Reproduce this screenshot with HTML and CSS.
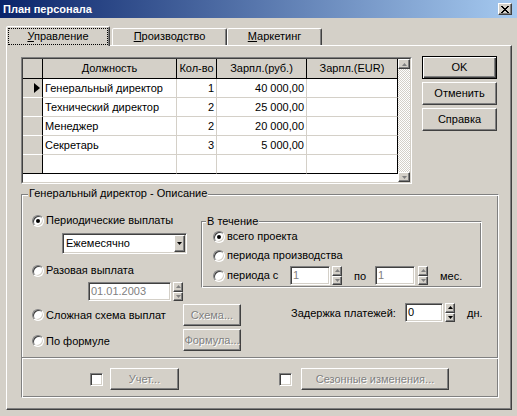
FILE: index.html
```html
<!DOCTYPE html>
<html lang="ru">
<head>
<meta charset="utf-8">
<title>План персонала</title>
<link rel="stylesheet" href="styles.css">
</head>
<body>
<div class="window">
  <div class="titlebar">
    <span class="title">План персонала</span>
    <span class="close"><svg width="8" height="7" viewBox="0 0 8 7"><path d="M0 0h2v1H0zM6 0h2v1H6zM1 1h2v1H1zM5 1h2v1H5zM2 2h4v1H2zM3 3h2v1H3zM2 4h4v1H2zM1 5h2v1H1zM5 5h2v1H5zM0 6h2v1H0zM6 6h2v1H6z" fill="#000"/></svg></span>
  </div>
  <div class="tabs">
    <div class="tab active"><span class="focus"><u>У</u>правление</span></div>
    <div class="tab t2"><u>П</u>роизводство</div>
    <div class="tab t3"><u>М</u>аркетинг</div>
  </div>
  <div class="panel">
    <div class="top">
      <div class="gridbox">
        <div class="gridin">
          <div class="table">
            <div class="row head">
              <div class="c ind"></div>
              <div class="c">Должность</div>
              <div class="c">Кол-во</div>
              <div class="c">Зарпл.(руб.)</div>
              <div class="c">Зарпл.(EUR)</div>
            </div>
            <div class="row">
              <div class="c ind"><svg width="6" height="10" viewBox="0 0 6 10"><path d="M0 0L6 5L0 10z" fill="#000"/></svg></div>
              <div class="c">Генеральный директор</div>
              <div class="c num">1</div>
              <div class="c num">40 000,00</div>
              <div class="c last"></div>
            </div>
            <div class="row">
              <div class="c ind"></div>
              <div class="c">Технический директор</div>
              <div class="c num">2</div>
              <div class="c num">25 000,00</div>
              <div class="c last"></div>
            </div>
            <div class="row">
              <div class="c ind"></div>
              <div class="c">Менеджер</div>
              <div class="c num">2</div>
              <div class="c num">20 000,00</div>
              <div class="c last"></div>
            </div>
            <div class="row">
              <div class="c ind"></div>
              <div class="c">Секретарь</div>
              <div class="c num">3</div>
              <div class="c num">5 000,00</div>
              <div class="c last"></div>
            </div>
            <div class="row end">
              <div class="c ind"></div>
              <div class="c"></div>
              <div class="c"></div>
              <div class="c"></div>
              <div class="c last"></div>
            </div>
            <div class="filler"></div>
          </div>
          <div class="scroll">
            <div class="sbtn"><svg width="5" height="3" viewBox="0 0 5 3"><path d="M2.5 0L5 3H0z" fill="#808080"/></svg></div>
            <div class="track"></div>
            <div class="sbtn"><svg width="5" height="3" viewBox="0 0 5 3"><path d="M0 0h5L2.5 3z" fill="#808080"/></svg></div>
          </div>
        </div>
      </div>
      <div class="btns">
        <div class="btn default">OK</div>
        <div class="btn">Отменить</div>
        <div class="btn">Справка</div>
      </div>
    </div>

    <div class="group main">
      <span class="gtitle">Генеральный директор - Описание</span>
      <div class="upper">
        <div class="lcol">
          <div class="rrow"><span class="radio on"></span><span>Периодические выплаты</span></div>
          <div class="combo">
            <span class="combo-text">Ежемесячно</span>
            <span class="combo-btn"><svg width="5" height="3" viewBox="0 0 5 3"><path d="M0 0h5L2.5 3z" fill="#000"/></svg></span>
          </div>
          <div class="rrow r2"><span class="radio"></span><span>Разовая выплата</span></div>
          <div class="date-row">
            <div class="edit dis e83">01.01.2003</div>
            <div class="spin dis">
              <i><svg width="5" height="3" viewBox="0 0 5 3"><path d="M2.5 0L5 3H0z"/></svg></i>
              <i><svg width="5" height="3" viewBox="0 0 5 3"><path d="M0 0h5L2.5 3z"/></svg></i>
            </div>
          </div>
        </div>
        <div class="group during">
          <span class="gtitle">В течение</span>
          <div class="rrow"><span class="radio on"></span><span>всего проекта</span></div>
          <div class="rrow d2"><span class="radio"></span><span>периода производства</span></div>
          <div class="prow">
            <div class="rrow plabel"><span class="radio"></span><span>периода с</span></div>
            <div class="edit dis e40">1</div>
            <div class="spin dis">
              <i><svg width="5" height="3" viewBox="0 0 5 3"><path d="M2.5 0L5 3H0z"/></svg></i>
              <i><svg width="5" height="3" viewBox="0 0 5 3"><path d="M0 0h5L2.5 3z"/></svg></i>
            </div>
            <span class="po">по</span>
            <div class="edit dis e40">1</div>
            <div class="spin dis s3">
              <i><svg width="5" height="3" viewBox="0 0 5 3"><path d="M2.5 0L5 3H0z"/></svg></i>
              <i><svg width="5" height="3" viewBox="0 0 5 3"><path d="M0 0h5L2.5 3z"/></svg></i>
            </div>
            <span class="mes">мес.</span>
          </div>
        </div>
      </div>

      <div class="orow oe">
        <div class="rrow olabel"><span class="radio"></span><span>Сложная схема выплат</span></div>
        <div class="btn dis small">Схема...</div>
        <div class="delay">
          <span class="delay-label">Задержка платежей:</span>
          <div class="edit e38">0</div>
          <div class="spin">
            <i><svg width="5" height="3" viewBox="0 0 5 3"><path d="M2.5 0L5 3H0z"/></svg></i>
            <i><svg width="5" height="3" viewBox="0 0 5 3"><path d="M0 0h5L2.5 3z"/></svg></i>
          </div>
          <span class="dn">дн.</span>
        </div>
      </div>
      <div class="orow of">
        <div class="rrow olabel"><span class="radio"></span><span>По формуле</span></div>
        <div class="btn dis small">Формула...</div>
      </div>
      <div class="sep"></div>
      <div class="brow">
        <span class="check"></span>
        <div class="btn dis b-uchet">Учет...</div>
        <span class="check c2"></span>
        <div class="btn dis b-season">Сезонные изменения...</div>
      </div>
    </div>
  </div>
</div>
</body>
</html>
```
FILE: styles.css
```css
* { box-sizing: border-box; }
html, body { margin: 0; padding: 0; }
body {
  width: 517px; height: 416px; overflow: hidden;
  background: #d4d0c8;
  font-family: "Liberation Sans", Arial, sans-serif;
  font-size: 11px; color: #000;
}
.window { width: 517px; height: 416px; display: flex; flex-direction: column; }

/* title bar */
.titlebar {
  height: 18px; flex: none;
  display: flex; align-items: center; justify-content: space-between;
  padding: 0 5px 0 3px;
  background: linear-gradient(to right, #0a246a, #a6caf0);
}
.title { color: #fff; font-weight: bold; line-height: 18px; }
.close {
  width: 14px; height: 12px; background: #d4d0c8;
  border: 1px solid; border-color: #fff #404040 #404040 #fff;
  box-shadow: inset -1px -1px #808080;
  display: flex; align-items: center; justify-content: center;
}
.close svg { display: block; }

/* tabs */
.tabs { height: 27px; flex: none; display: flex; align-items: flex-end; padding-left: 6px; }
.tab {
  height: 17px; padding-top: 1px; line-height: 13px; text-align: center; white-space: nowrap;
  border: 1px solid; border-bottom: 0; border-color: #fff #404040 transparent #fff;
  box-shadow: inset -1px 0 #808080;
  border-radius: 2px 2px 0 0;
  background: #d4d0c8;
}
.tab.active { width: 104px; height: 20px; margin-bottom: -1px; padding: 1px 1px 0; position: relative; z-index: 1; }
.focus { display: block; border: 1px dotted #000; padding: 1px 0; line-height: 13px; }
.tab.t2 { width: 115px; margin-left: 2px; }
.tab.t3 { width: 95px; }

/* panel */
.panel {
  width: 506px; height: 365px; margin-left: 6px; flex: none;
  border: 1px solid; border-color: #fff #404040 #404040 #fff;
  box-shadow: inset -1px -1px #808080;
  padding: 10px 0 0 14px;
  display: flex; flex-direction: column;
}
.top { display: flex; align-items: flex-start; }

/* grid */
.gridbox {
  margin-top: 1px; width: 391px; height: 127px;
  border: 1px solid; border-color: #808080 #fff #fff #808080;
}
.gridin {
  height: 100%; display: flex; background: #fff;
  border: 1px solid; border-color: #404040 #d4d0c8 #d4d0c8 #404040;
}
.table { width: 375px; display: flex; flex-direction: column; }
.row { display: grid; grid-template-columns: 20px 134px 40px 90px 91px; height: 19px; flex: none; }
.row.head { height: 20px; }
.c {
  border-right: 1px solid #d4d0c8; border-bottom: 1px solid #d4d0c8;
  padding: 0 2px; line-height: 18px; white-space: nowrap; overflow: hidden;
}
.c.num { text-align: right; }
.c.last { border-right-color: #000; }
.c.ind {
  background: #d4d0c8; border-right-color: #000; border-bottom-color: #fff;
  display: flex; align-items: center; justify-content: flex-end; padding: 0 2px 0 0;
}
.c.ind svg { display: block; }
.row.end .c { border-bottom-color: #000; }
.head .c {
  background: #d4d0c8; border-right-color: #000; border-bottom-color: #000;
  text-align: center; line-height: 19px; padding: 0;
}
.filler { flex: 1; }
.scroll { width: 12px; display: flex; flex-direction: column; }
.sbtn {
  height: 10px; flex: none; background: #d4d0c8;
  border: 1px solid; border-color: #fff #404040 #404040 #fff;
  box-shadow: inset -1px -1px #808080;
  display: flex; align-items: center; justify-content: center;
}
.sbtn svg { display: block; }
.track { flex: 1; background: repeating-conic-gradient(#d4d0c8 0 25%, #fff 0 50%) 0 0 / 2px 2px; }

/* buttons */
.btns { margin-left: 10px; display: flex; flex-direction: column; gap: 3px; }
.btn {
  width: 75px; height: 23px; background: #d4d0c8;
  border: 1px solid; border-color: #fff #404040 #404040 #fff;
  box-shadow: inset -1px -1px #808080;
  display: flex; align-items: center; justify-content: center;
  white-space: nowrap; line-height: 13px;
}
.btn.default {
  border-color: #000;
  box-shadow: inset 1px 1px #fff, inset -1px -1px #404040, inset -2px -2px #808080;
}
.btn.dis { color: #808080; text-shadow: 1px 1px #fff; }
.btn.small { width: 58px; height: 22px; }
.b-uchet { width: 69px; height: 22px; }
.b-season { width: 148px; height: 22px; margin-left: 9px; }

/* groups */
.group {
  position: relative;
  border: 1px solid; border-color: #808080 #fff #fff #808080;
  box-shadow: inset 1px 1px #fff, inset -1px -1px #808080;
}
.gtitle {
  position: absolute; top: -8px; left: 6px; padding: 0 1px;
  background: #d4d0c8; line-height: 13px; white-space: nowrap;
}
.group.main { margin-top: 10px; width: 478px; height: 204px; }
.upper { display: flex; align-items: flex-start; }
.lcol { width: 179px; padding: 19px 0 0 10px; }

.rrow { display: flex; align-items: center; gap: 2px; height: 13px; line-height: 13px; white-space: nowrap; }
.r2 { margin-top: 10px; }
.radio {
  width: 12px; height: 12px; flex: none; position: relative;
  border-radius: 50%; background: #fff;
  border: 1px solid; border-color: #808080 #fff #fff #808080;
  box-shadow: inset 1px 1px #404040, inset -1px -1px #d4d0c8;
}
.radio.on::after {
  content: ""; position: absolute; left: 3px; top: 3px;
  width: 4px; height: 4px; border-radius: 50%; background: #000;
}

.combo {
  margin: 6px 0 0 30px; width: 125px; height: 21px; padding: 1px;
  display: flex; align-items: stretch; background: #fff;
  border: 1px solid; border-color: #808080 #fff #fff #808080;
  box-shadow: inset 1px 1px #404040, inset -1px -1px #d4d0c8;
}
.combo-text { flex: 1; padding-left: 2px; line-height: 17px; }
.combo-btn {
  width: 11px; background: #d4d0c8;
  border: 1px solid; border-color: #fff #404040 #404040 #fff;
  box-shadow: inset -1px -1px #808080;
  display: flex; align-items: center; justify-content: center;
}
.combo-btn svg { display: block; }

.date-row { display: flex; margin: 5px 0 0 56px; }
.edit {
  height: 19px; background: #fff; padding: 0 2px; line-height: 17px; white-space: nowrap;
  border: 1px solid; border-color: #808080 #fff #fff #808080;
  box-shadow: inset 1px 1px #404040, inset -1px -1px #d4d0c8;
}
.edit.dis { color: #808080; }
.e83 { width: 83px; }
.e40 { width: 40px; }
.e38 { width: 38px; }
.spin { width: 10px; height: 19px; margin-left: 2px; display: flex; flex-direction: column; flex: none; }
.spin i {
  flex: 1; background: #d4d0c8;
  border: 1px solid; border-color: #fff #404040 #404040 #fff;
  box-shadow: inset -1px -1px #808080;
  display: flex; align-items: center; justify-content: center;
}
.spin svg { display: block; fill: #000; }
.spin.dis svg { fill: #808080; }
.spin.s3 { margin-left: 3px; }

.group.during { margin-top: 26px; width: 281px; height: 67px; padding: 8px 0 0 11px; }
.during .gtitle { left: 4px; top: -7px; }
.d2 { margin-top: 6px; }
.prow { display: flex; align-items: center; margin-top: 4px; height: 19px; }
.plabel { width: 77px; }
.po { width: 33px; padding-left: 12px; }
.mes { margin-left: 12px; }

.orow { display: flex; align-items: center; height: 22px; padding-left: 10px; }
.oe { margin-top: 3px; }
.of { margin-top: 3px; }
.olabel { width: 151px; }
.of .olabel { margin-top: 2px; }
.delay { display: flex; align-items: center; height: 19px; margin-left: 50px; align-self: flex-start; margin-top: -1px; }
.delay-label { width: 114px; white-space: nowrap; }
.dn { margin-left: 12px; }

.sep { height: 2px; margin-top: 6px; border-top: 1px solid #808080; border-bottom: 1px solid #fff; }
.brow { display: flex; align-items: center; height: 22px; margin-top: 9px; padding-left: 68px; }
.check {
  width: 13px; height: 13px; flex: none; background: #fff; margin-right: 7px;
  border: 1px solid; border-color: #808080 #fff #fff #808080;
  box-shadow: inset 1px 1px #404040, inset -1px -1px #d4d0c8;
}
.check.c2 { margin: 0 0 0 100px; }
```
